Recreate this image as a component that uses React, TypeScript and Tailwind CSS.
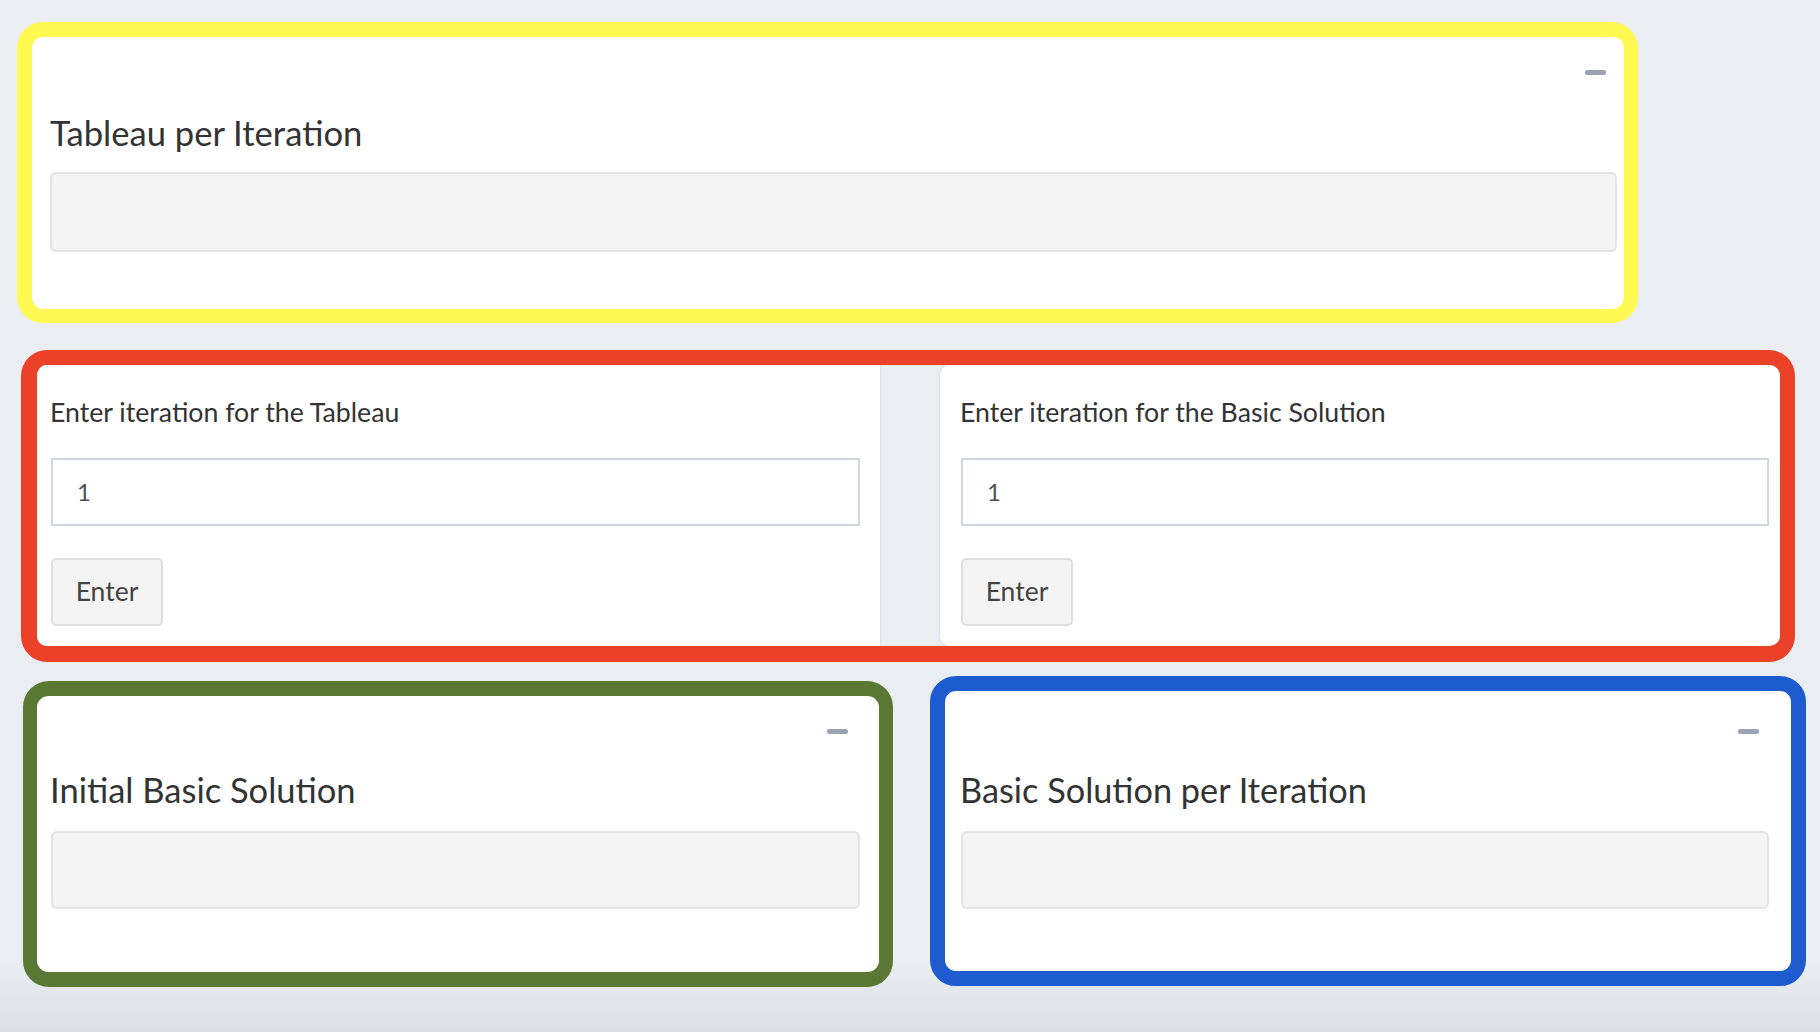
import React from "react";

function Minus({ className }: { className: string }) {
  return <div className={"h-[5px] w-[21px] rounded-[2px] bg-[#9ba2b4] " + className} />;
}

export default function App() {
  return (
    <div className="w-[1820px] h-[1032px] overflow-hidden bg-[linear-gradient(to_bottom,#eaedf2_0%,#eaedf2_93%,#dcdfe5_100%)] font-['Lato',sans-serif] text-[#333]">
      <div className="pl-[17px] pt-[22px] flex flex-col items-start">
        {/* Yellow: Tableau per Iteration */}
        <div className="w-[1621px] h-[301px] bg-white border-[#fff952] border-t-[15px] border-l-[15px] border-r-[14px] border-b-[14px] rounded-[26px] pl-[18px] pr-[7px] flex flex-col">
          <div className="flex justify-end mt-[33px]">
            <Minus className="mr-[11px]" />
          </div>
          <div className="mt-[38px] text-[34.6px] leading-[40px]">Tableau per Iteration</div>
          <div className="mt-[19px] h-[80px] w-full bg-[#f4f4f4] border-2 border-[#e3e3e3] rounded-[6px]" />
        </div>

        {/* Red: inputs */}
        <div className="ml-[4px] mt-[27px] w-[1774px] h-[312px] border-[#eb4129] border-t-[15px] border-r-[15px] border-l-[16px] border-b-[16px] rounded-[26px] overflow-hidden bg-[#eaedf2] flex">
          <div className="w-[843px] h-full bg-white shadow-[0_0_3px_rgba(0,0,0,0.12)] pl-[14px] pt-[32px] flex flex-col items-start">
            <div className="text-[26.7px] leading-[31px] -ml-[1px]">Enter iteration for the Tableau</div>
            <div className="mt-[30px] w-[809px] h-[68px] border-2 border-[#d2d6de] pl-[24px] flex items-center text-[24px] text-[#495057]">1</div>
            <div className="mt-[32px] w-[112px] h-[68px] bg-[#f4f4f4] border-2 border-[#dedede] rounded-[5px] flex items-center justify-center text-[26.5px] text-[#444]">Enter</div>
          </div>
          <div className="ml-[60px] w-[840px] h-full bg-white rounded-[10px] shadow-[0_0_3px_rgba(0,0,0,0.12)] pl-[21px] pt-[32px] flex flex-col items-start">
            <div className="text-[26.7px] leading-[31px] -ml-[1px]">Enter iteration for the Basic Solution</div>
            <div className="mt-[30px] w-[808px] h-[68px] border-2 border-[#d2d6de] pl-[24px] flex items-center text-[24px] text-[#495057]">1</div>
            <div className="mt-[32px] w-[112px] h-[68px] bg-[#f4f4f4] border-2 border-[#dedede] rounded-[5px] flex items-center justify-center text-[26.5px] text-[#444]">Enter</div>
          </div>
        </div>

        {/* Bottom row */}
        <div className="flex items-start">
          <div className="ml-[6px] mt-[19px] w-[870px] h-[306px] bg-white border-[#5a7834] border-t-[15px] border-b-[15px] border-l-[14px] border-r-[14px] rounded-[26px] pl-[14px] pr-[19px] flex flex-col">
            <div className="flex justify-end mt-[33px]">
              <Minus className="mr-[12px]" />
            </div>
            <div className="mt-[36px] text-[34.5px] leading-[40px] -ml-[1px]">Initial Basic Solution</div>
            <div className="mt-[21px] h-[78px] w-full bg-[#f4f4f4] border-2 border-[#e3e3e3] rounded-[6px]" />
          </div>
          <div className="ml-[37px] mt-[14px] w-[876px] h-[310px] bg-white border-[#1e5bcf] border-[15px] rounded-[26px] pl-[16px] pr-[22px] flex flex-col">
            <div className="flex justify-end mt-[38px]">
              <Minus className="mr-[10px]" />
            </div>
            <div className="mt-[36px] text-[34.3px] leading-[40px] -ml-[1px]">Basic Solution per Iteration</div>
            <div className="mt-[21px] h-[78px] w-full bg-[#f4f4f4] border-2 border-[#e3e3e3] rounded-[6px]" />
          </div>
        </div>
      </div>
    </div>
  );
}
